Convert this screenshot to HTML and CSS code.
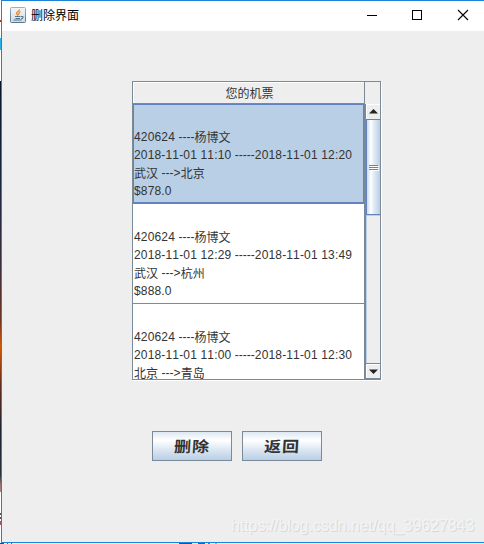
FILE: index.html
```html
<!DOCTYPE html>
<html lang="zh-CN">
<head>
<meta charset="utf-8">
<title>删除界面</title>
<link rel="stylesheet" href="styles.css">
</head>
<body>
<div class="desktop">
  <div class="backdrop"></div>
  <div class="window">
    <header class="titlebar">
      <svg class="java" width="16" height="16" viewBox="0 0 16 16">
        <defs><linearGradient id="g" x1="0" y1="0" x2="0" y2="1"><stop offset="0" stop-color="#9db0bb"/><stop offset="1" stop-color="#54758d"/></linearGradient><linearGradient id="f" x1="0" y1="0" x2="0" y2="1"><stop offset="0" stop-color="#f4f6f7"/><stop offset="1" stop-color="#cfdbe3"/></linearGradient></defs>
        <rect x=".5" y=".5" width="15" height="15" rx="1" fill="url(#f)" stroke="url(#g)"/>
        <path d="M9.500 2.500C9.500 4.500 6 5 6.500 6.500L8 8.500M10.500 4.500C8 5.500 9.500 6.500 8.500 8" fill="none" stroke="#e8892b" stroke-width="1.300"/>
        <path d="M5 9.500H10.500M5.500 11.500H10M3.500 13H11.500M11 9.500C14 9 13.500 11.500 11 12" fill="none" stroke="#50758f" stroke-width="1.100"/>
      </svg>
      <span class="title">删除界面</span>
      <svg class="controls" width="104" height="12" viewBox="0 0 104 12" shape-rendering="crispEdges">
        <path d="M0 6.500H10" stroke="#000"/>
        <rect x="45.500" y="1.500" width="9" height="9" fill="none" stroke="#000"/>
        <path d="M91 1L101 11M101 1L91 11" stroke="#000" stroke-width="1.100" shape-rendering="auto"/>
      </svg>
    </header>
    <main class="content">
      <section class="pane">
        <div class="head"><div class="column">您的机票</div><div class="corner"></div></div>
        <div class="body">
          <div class="rows">
            <div class="row selected"><p>420624 <b>----</b><span>杨博文</span></p><p>2018-11-01 11:10 <b>-----</b>2018-11-01 12:20</p><p><span>武汉</span> <b>---</b>&gt;<span>北京</span></p><p>$878.0</p></div>
            <div class="row"><p>420624 <b>----</b><span>杨博文</span></p><p>2018-11-01 12:29 <b>-----</b>2018-11-01 13:49</p><p><span>武汉</span> <b>---</b>&gt;<span>杭州</span></p><p>$888.0</p></div>
            <div class="row"><p>420624 <b>----</b><span>杨博文</span></p><p>2018-11-01 11:00 <b>-----</b>2018-11-01 12:30</p><p><span>北京</span> <b>---</b>&gt;<span>青岛</span></p></div>
          </div>
          <div class="scrollbar">
            <div class="arrow up"><svg width="9" height="5" viewBox="0 0 9 5"><path d="M0 4.500L4.500 0L9 4.500Z" fill="#222"/></svg></div>
            <div class="thumb"><i></i><i></i><i></i></div>
            <div class="track"></div>
            <div class="arrow down"><svg width="9" height="5" viewBox="0 0 9 5"><path d="M0 .5H9L4.500 5Z" fill="#222"/></svg></div>
          </div>
        </div>
      </section>
      <div class="actions"><button><span>删除</span></button><button><span>返回</span></button></div>
      <div class="watermark">https://blog.csdn.net/qq_39627843</div>
    </main>
  </div>
  <div class="below"></div>
</div>
</body>
</html>
```

FILE: styles.css
```css
* { box-sizing: border-box; }
body { margin: 0; font-family: "Liberation Sans", "Noto Sans CJK SC", sans-serif; font-size: 12px; color: #333; overflow: hidden; }
p { margin: 0; }
.desktop { width: 484px; height: 544px; display: grid; grid-template: 543px 1px / 1px 483px; background: #fff; }
.backdrop { background: linear-gradient(#fff 0 20px, #a33 20px 22px, #fff 22px 38px, #28b1e8 38px 50px, #fff 50px 81px, #07152c 81px, #192944 180px, #40303d 270px, #6d3521 320px, #d45a06 346px, #632d1c 385px, #202332 430px, #26313d 475px, #9b7772 485px, #a98582 492px, #fff 492px 513px, #555 513px 515px, #fff 515px 517px, #555 517px 519px, #fff 519px 521px, #a65577 521px 525px, #fff 525px); }
.window { height: 543px; border: 1px solid #1c83d8; border-right: 0; display: flex; flex-direction: column; }
.titlebar { height: 30px; flex: none; display: flex; align-items: center; padding-left: 8px; background: #fff; color: #000; }
.java { margin-top: -2px; }
.title { margin: 0 0 0 5px; width: 48px; line-height: 16px; white-space: nowrap; }
.controls { margin: -2px 0 0 288px; }
.content { flex: 1; display: flex; flex-direction: column; padding: 50px 0 0 130px; background: #eee; }
.pane { width: 249px; height: 299px; border: 1px solid #7a8a99; box-shadow: 1px 1px #fff; display: flex; flex-direction: column; }
.head { height: 22px; flex: none; display: flex; }
.column { width: 232px; padding: 1px 0 0 2px; border-right: 1px solid #7a8a99; border-bottom: 1px solid #7a8a99; box-shadow: inset 1px 1px #fff; line-height: 22px; text-align: center; }
.corner { flex: 1; }
.body { flex: 1; min-height: 0; display: flex; }
.rows { width: 232px; flex: none; overflow: hidden; background: #fff; border-right: 1px solid #7a8a99; }
.row { height: 100px; padding: 24px 0 0 1px; border-bottom: 1px solid #7a8a99; line-height: 18px; letter-spacing: .16px; font-kerning: none; white-space: nowrap; }
.row p { height: 18px; }
.row b { font-weight: normal; letter-spacing: 0; }
.row span { position: relative; top: 1px; letter-spacing: 0; }
.selected { background: #b8cfe5; box-shadow: inset 0 0 0 1px #6382bf; outline: 1px solid #6382bf; outline-offset: -1px; }
.scrollbar { flex: 1; display: flex; flex-direction: column; border-left: 1px solid #7a8a99; }
.arrow { height: 15px; flex: none; display: flex; align-items: center; justify-content: center; box-shadow: inset 1px 1px #fff; }
.up { padding-bottom: 1px; }
.down { border-top: 1px solid #7a8a99; border-bottom: 1px solid #7a8a99; height: 16px; }
.thumb { height: 96px; flex: none; border: 1px solid #6382bf; border-right: 0; background: linear-gradient(90deg, #c8dcef, #fff 30%, #e5edf5 50%, #b8cfe5); display: flex; flex-direction: column; align-items: center; justify-content: center; gap: 1px; }
.thumb i { width: 9px; height: 1px; background: #6382bf; box-shadow: 1px 1px #fff; }
.track { flex: 1; border-left: 1px solid #b8cfe5; border-top: 1px solid #b8cfe5; }
.actions { display: flex; gap: 10px; margin: 51px 0 0 20px; }
button { width: 80px; height: 30px; padding: 0; border: 1px solid #7a8a99; background: linear-gradient(#dde8f3, #fff 30%, #dae5f1 65%, #b8cfe5); color: #333; font: bold 17px/26px "Noto Sans CJK SC", sans-serif; letter-spacing: 1px; }
button span { display: inline-block; transform: scaleY(.88) skewX(-3deg); }
.watermark { margin: 55px 0 0 99px; font-size: 16px; line-height: 20px; letter-spacing: -.07px; width: 246px; white-space: nowrap; color: #f4f4f4; text-shadow: 1px 1px #d8d8d8; }
.below { grid-column: 1 / 3; background: linear-gradient(90deg, #445 0 4px, #fff 4px 7px, #567 7px 8px, #fff 8px 11px, #567 11px 12px, #fff 12px 179px, #445 179px 192px, #fff 192px 198px, #556 198px 205px, #fff 205px 208px, #678 208px 210px, #fff 210px 215px, #8bc 215px 217px, #fff 217px); }
```
